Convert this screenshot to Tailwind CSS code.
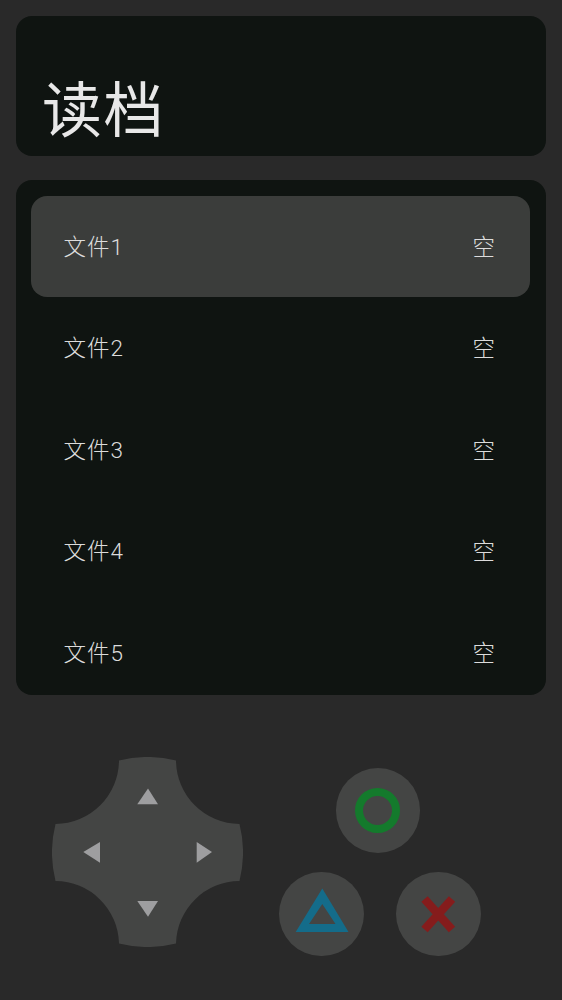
<!DOCTYPE html>
<html lang="zh-CN">
<head>
    <meta charset="UTF-8">
    <meta name="viewport" content="width=device-width, initial-scale=1.0">
    <title>读档</title>
    <script src="https://cdn.jsdelivr.net/npm/@tailwindcss/browser@4"></script>
</head>
<body class="w-[562px] h-[1000px] overflow-hidden bg-[#292929] px-4 pt-4 font-['Roboto','Noto_Sans_CJK_SC',sans-serif]">

    <div class="h-[140px] rounded-2xl bg-[#0f1411] flex items-end px-[26px]">
        <h1 class="text-[60px] tracking-[1.5px] leading-[74px] font-normal text-[#e8e8e8] mb-[7px]">读档</h1>
    </div>

    <div class="mt-6 h-[515px] overflow-hidden rounded-2xl bg-[#0f1411] pt-4 pl-[15px] pr-4 text-[22.5px] tracking-[1px] font-light text-[#dcdcdc]">
        <div class="h-[101px] mb-[0.6px] rounded-2xl bg-[#3b3d3b] flex items-center justify-between pt-[2px] pl-[32.5px] pr-[34px]"><span>文件1</span><span>空</span></div>
        <div class="h-[101px] mb-[0.6px] flex items-center justify-between pt-[2px] pl-[32.5px] pr-[34px]"><span>文件2</span><span>空</span></div>
        <div class="h-[101px] mb-[0.6px] flex items-center justify-between pt-[2px] pl-[32.5px] pr-[34px]"><span>文件3</span><span>空</span></div>
        <div class="h-[101px] mb-[0.6px] flex items-center justify-between pt-[2px] pl-[32.5px] pr-[34px]"><span>文件4</span><span>空</span></div>
        <div class="h-[101px] flex items-center justify-between pt-[2px] pl-[32.5px] pr-[34px]"><span>文件5</span><span>空</span></div>
    </div>

    <div class="mt-[62px] flex items-start">
        <!-- d-pad -->
        <svg class="ml-[36px] shrink-0" width="191" height="190" viewBox="0 0 191 190">
            <path fill="#444544" d="M67 3.5 A118 118 0 0 1 124 3.5 A64 64 0 0 0 187.5 67 A118 118 0 0 1 187.5 124 A64 64 0 0 0 124 186.5 A118 118 0 0 1 67 186.5 A64 64 0 0 0 3.5 124 A118 118 0 0 1 3.5 67 A64 64 0 0 0 67 3.5 Z"/>
            <path fill="#9e9ea0" d="M96 31.5 L106 47.3 L85.3 47.3 Z"/>
            <path fill="#9e9ea0" d="M96 159.7 L106 144 L85.3 144 Z"/>
            <path fill="#9e9ea0" d="M31.3 95 L48 85 L48 105.7 Z"/>
            <path fill="#9e9ea0" d="M160 95 L144.7 85 L144.7 105.7 Z"/>
        </svg>

        <!-- action buttons -->
        <div class="ml-[36px] mt-[11px] w-[202px] flex flex-col gap-[19px]">
            <div class="ml-[56.7px] w-[84.5px] h-[84.5px] rounded-full bg-[#444544] flex items-center justify-center">
                <div class="w-[45px] h-[45px] rounded-full border-[8.5px] border-[#147a2c]"></div>
            </div>
            <div class="flex gap-[32.5px]">
                <div class="w-[84.5px] h-[84.5px] rounded-full bg-[#444544]">
                    <svg width="84.5" height="84.5" viewBox="0 0 84.5 84.5">
                        <path fill="#146c8a" fill-rule="evenodd" d="M43.3 16.5 L69.5 60 L16.7 60 Z M43.3 32 L30 52 L56.5 52 Z"/>
                    </svg>
                </div>
                <div class="w-[84.5px] h-[84.5px] rounded-full bg-[#444544]">
                    <svg width="84.5" height="84.5" viewBox="0 0 84.5 84.5">
                        <path stroke="#851c1c" stroke-width="8.5" fill="none" d="M28.5 27 L56 57.5 M56 27 L28.5 57.5"/>
                    </svg>
                </div>
            </div>
        </div>
    </div>

</body>
</html>
